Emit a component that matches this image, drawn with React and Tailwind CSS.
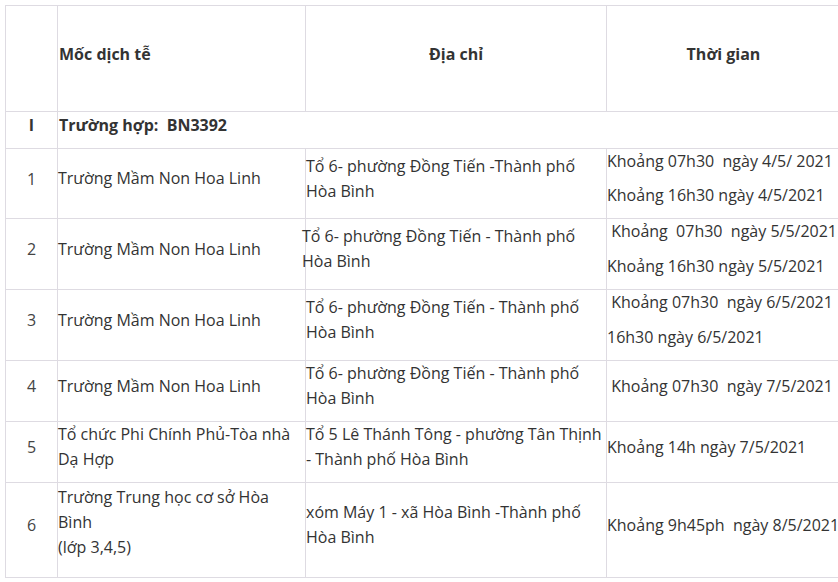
import React from 'react';

// Bảng mốc dịch tễ — mỗi dòng: stt, địa điểm, địa chỉ, thời gian
const ROWS = [
  {
    no: '1',
    h: 'h-[69px]',
    place: ['Trường Mầm Non Hoa Linh'],
    addr: ['Tổ 6- phường Đồng Tiến -Thành phố', 'Hòa Bình'],
    times: ['Khoảng 07h30  ngày 4/5/ 2021', 'Khoảng 16h30 ngày 4/5/2021'],
    gap: 'gap-[9px]',
  },
  {
    no: '2',
    h: 'h-[70px]',
    place: ['Trường Mầm Non Hoa Linh'],
    addr: ['Tổ 6- phường Đồng Tiến - Thành phố', 'Hòa Bình'],
    shift: true,
    times: [' Khoảng  07h30  ngày 5/5/2021', 'Khoảng 16h30 ngày 5/5/2021'],
  },
  {
    no: '3',
    h: 'h-[70px]',
    place: ['Trường Mầm Non Hoa Linh'],
    addr: ['Tổ 6- phường Đồng Tiến - Thành phố', 'Hòa Bình'],
    times: [' Khoảng 07h30  ngày 6/5/2021', '16h30 ngày 6/5/2021'],
  },
  {
    no: '4',
    h: 'h-[60px]',
    place: ['Trường Mầm Non Hoa Linh'],
    addr: ['Tổ 6- phường Đồng Tiến - Thành phố', 'Hòa Bình'],
    times: [' Khoảng 07h30  ngày 7/5/2021'],
  },
  {
    no: '5',
    h: 'h-[60px]',
    place: ['Tổ chức Phi Chính Phủ-Tòa nhà', 'Dạ Hợp'],
    addr: ['Tổ 5 Lê Thánh Tông - phường Tân Thịnh', '- Thành phố Hòa Bình'],
    times: ['Khoảng 14h ngày 7/5/2021'],
  },
  {
    no: '6',
    h: 'h-[95px]',
    place: ['Trường Trung học cơ sở Hòa', 'Bình', '(lớp 3,4,5)'],
    placePad: true,
    addr: ['xóm Máy 1 - xã Hòa Bình -Thành phố', 'Hòa Bình'],
    times: ['Khoảng 9h45ph  ngày 8/5/2021'],
  },
];

const cell = 'border border-[#dedbe2] p-0 pb-[10px] align-middle';

function Lines({ items }) {
  return (
    <div className="leading-[25px]">
      {items.map((t, i) => (
        <div key={i} className="whitespace-pre">
          {t}
        </div>
      ))}
    </div>
  );
}

export default function App() {
  return (
    <div
      className="w-[838px] h-[582px] overflow-hidden bg-white pl-[5px] pt-[5px] text-[16px] text-[#333]"
      style={{ fontFamily: '"Open Sans", "Liberation Sans", sans-serif' }}
    >
      <table className="w-[835px] table-fixed border-collapse">
        <colgroup>
          <col className="w-[52px]" />
          <col className="w-[248px]" />
          <col className="w-[301px]" />
          <col className="w-[234px]" />
        </colgroup>
        <tbody>
          <tr className="h-[106px] font-bold">
            <td className={cell}></td>
            <td className={cell}>
              <div className="pl-[1px]">Mốc dịch tễ</div>
            </td>
            <td className={cell + ' text-center'}>Địa chỉ</td>
            <td className={cell + ' text-center'}>Thời gian</td>
          </tr>
          <tr className="h-[37px] font-bold">
            <td className={cell + ' text-center'}>I</td>
            <td className={cell} colSpan={3}>
              <div className="whitespace-pre pl-[1px]">Trường hợp:  BN3392</div>
            </td>
          </tr>
          {ROWS.map((r) => (
            <tr key={r.no} className={r.h}>
              <td className={cell + ' text-center text-[#444]'}>{r.no}</td>
              <td className={r.placePad ? cell + ' pb-[16px]' : cell}>
                <Lines items={r.place} />
              </td>
              <td className={cell}>
                <div className={r.shift ? '-ml-[4px]' : ''}>
                  <Lines items={r.addr} />
                </div>
              </td>
              <td className={cell}>
                <div className={'flex flex-col leading-[25px] ' + (r.gap || 'gap-[10px]')}>
                  {r.times.map((t, i) => (
                    <div key={i} className="whitespace-pre">
                      {t}
                    </div>
                  ))}
                </div>
              </td>
            </tr>
          ))}
        </tbody>
      </table>
    </div>
  );
}
